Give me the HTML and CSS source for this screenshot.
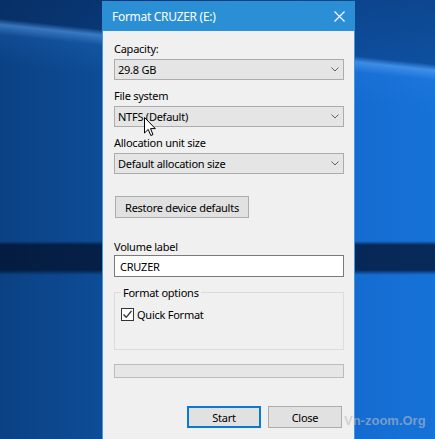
FILE: index.html
```html
<!DOCTYPE html>
<html>
<head>
<meta charset="utf-8">
<link rel="stylesheet" href="styles.css">
</head>
<body>
<div class="desktop">
  <div class="dialog">
    <div class="titlebar">
      <span class="title">Format CRUZER (E:)</span>
      <span class="close">
        <svg width="11" height="11" viewBox="0 0 11 11"><path d="M0.5 0.5 L10.5 10.5 M10.5 0.5 L0.5 10.5" stroke="#fff" stroke-width="1.2" fill="none"/></svg>
      </span>
    </div>
    <div class="content">
      <div class="label">Capacity:</div>
      <div class="combo"><span>29.8 GB</span><svg class="chev" width="8" height="5" viewBox="0 0 8 5"><path d="M0.5 0.5 L4 4 L7.5 0.5" stroke="#606060" stroke-width="1" fill="none"/></svg></div>
      <div class="label gap">File system</div>
      <div class="combo"><span>NTFS (Default)</span><svg class="chev" width="8" height="5" viewBox="0 0 8 5"><path d="M0.5 0.5 L4 4 L7.5 0.5" stroke="#606060" stroke-width="1" fill="none"/></svg></div>
      <div class="label gap">Allocation unit size</div>
      <div class="combo"><span>Default allocation size</span><svg class="chev" width="8" height="5" viewBox="0 0 8 5"><path d="M0.5 0.5 L4 4 L7.5 0.5" stroke="#606060" stroke-width="1" fill="none"/></svg></div>
      <div class="btn restore">Restore device defaults</div>
      <div class="label vol">Volume label</div>
      <div class="input">CRUZER</div>
      <div class="group">
        <span class="legend">Format options</span>
        <div class="check-row">
          <span class="checkbox"><svg width="11" height="11" viewBox="0 0 11 11"><path d="M1.5 5.5 L4.2 8.3 L9.5 2" stroke="#333" stroke-width="1.3" fill="none"/></svg></span>
          <span>Quick Format</span>
        </div>
      </div>
      <div class="progress"></div>
      <div class="actions">
        <div class="btn start">Start</div>
        <div class="btn">Close</div>
      </div>
    </div>
  </div>
  <svg class="cursor" width="12" height="20" viewBox="0 0 12 20"><path d="M0.5 0.5 L0.5 16 L4.2 12.4 L6.8 18.5 L9 17.6 L6.5 11.6 L11.3 11.6 Z" fill="#fff" stroke="#000" stroke-width="1"/></svg>
  <div class="watermark">Vn-zoom.Org</div>
</div>
</body>
</html>
```
FILE: styles.css
```css
html, body {
  margin: 0;
  padding: 0;
}
body {
  width: 435px;
  height: 439px;
  overflow: hidden;
  font-family: "Noto Sans", "DejaVu Sans", sans-serif;
  font-size: 11px;
  letter-spacing: -0.25px;
  color: #000;
}
.desktop {
  position: relative;
  width: 435px;
  height: 439px;
  overflow: hidden;
  padding-top: 1px;
  box-sizing: border-box;
  background:
    linear-gradient(to bottom, transparent 241px, rgba(2, 14, 40, 0.72) 245px, rgba(2, 14, 40, 0.72) 270px, transparent 275px),
    linear-gradient(186deg, rgba(0, 18, 55, 0.45) 0, rgba(0, 18, 55, 0.35) 64px, rgba(110, 180, 255, 0.45) 70px, rgba(60, 140, 240, 0.12) 80px, transparent 110px),
    linear-gradient(to right, #0b4183 0%, #0d4d98 25%, #1262be 60%, #156dd2 85%, #1672d8 100%);
}
.dialog {
  margin-left: 102px;
  width: 253px;
  height: 470px;
  box-sizing: border-box;
  border: 1px solid #3f9be0;
  border-top: 0;
  background: #f0f0f0;
  display: flex;
  flex-direction: column;
}
.titlebar {
  height: 30px;
  margin: 0 -1px;
  background: #2b8fd6;
  color: #fff;
  display: flex;
  align-items: center;
  justify-content: space-between;
  padding: 0 10px 0 10px;
  font-size: 12px;
  letter-spacing: -0.3px;
}
.close {
  display: flex;
  width: 11px;
  height: 11px;
}
.content {
  padding: 10px 10px 0 11px;
  display: flex;
  flex-direction: column;
}
.label {
  line-height: 15px;
  height: 15px;
  white-space: nowrap;
}
.label.gap {
  margin-top: 8px;
}
.combo {
  margin-top: 3px;
  height: 21px;
  box-sizing: border-box;
  border: 1px solid #acacac;
  background: #e5e5e5;
  display: flex;
  align-items: center;
  justify-content: space-between;
  padding: 0 4px 0 3px;
}
.chev {
  display: block;
}
.btn {
  height: 22px;
  box-sizing: border-box;
  border: 1px solid #adadad;
  background: #e1e1e1;
  display: flex;
  align-items: center;
  justify-content: center;
  white-space: nowrap;
}
.restore {
  margin-top: 22px;
  margin-left: 1px;
  width: 134px;
}
.label.vol {
  margin-top: 21px;
}
.input {
  margin-top: 1px;
  height: 22px;
  box-sizing: border-box;
  border: 1px solid #7a7a7a;
  background: #fff;
  display: flex;
  align-items: center;
  padding-left: 5px;
}
.group {
  margin-top: 15px;
  height: 58px;
  box-sizing: border-box;
  border: 1px solid #dcdcdc;
  display: flex;
  flex-direction: column;
  align-items: flex-start;
}
.legend {
  margin-top: -8px;
  margin-left: 6px;
  padding: 0 2px;
  background: #f0f0f0;
  line-height: 15px;
}
.check-row {
  margin-top: 7px;
  margin-left: 6px;
  display: flex;
  align-items: center;
  gap: 3px;
  line-height: 15px;
}
.checkbox {
  width: 13px;
  height: 13px;
  box-sizing: border-box;
  border: 1px solid #333;
  background: #fff;
  display: flex;
  align-items: center;
  justify-content: center;
}
.progress {
  margin-top: 14px;
  height: 14px;
  box-sizing: border-box;
  border: 1px solid #bcbcbc;
  background: #e6e6e6;
}
.actions {
  margin-top: 28px;
  display: flex;
  justify-content: flex-end;
  gap: 7px;
  padding-right: 2px;
}
.actions .btn {
  width: 74px;
}
.btn.start {
  border: 2px solid #0a78d7;
}
.cursor {
  position: absolute;
  left: 144px;
  top: 117px;
}
.watermark {
  position: absolute;
  left: 344px;
  top: 413px;
  white-space: nowrap;
  font-family: "Liberation Sans", Arial, sans-serif;
  font-weight: bold;
  font-size: 13px;
  letter-spacing: 0;
  color: rgba(185, 190, 195, 0.6);
}
```
